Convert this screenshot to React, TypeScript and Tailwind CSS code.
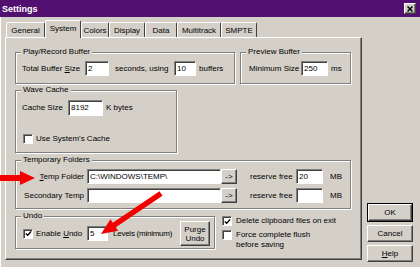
import type { ReactNode } from "react";

const tabs = [
  { label: "General", width: "w-[39px]" },
  { label: "System", width: "w-[36px]", active: true },
  { label: "Colors", width: "w-[28px]" },
  { label: "Display", width: "w-[36px]" },
  { label: "Data", width: "w-[32px]" },
  { label: "Multitrack", width: "w-[44px]" },
  { label: "SMPTE", width: "w-[36px]" },
];

// win9x 3d edges
const sunken =
  "bg-white border border-[#808080] border-r-white border-b-white shadow-[inset_1px_1px_0_#404040]";
const raised =
  "bg-[#d4d0c8] border border-white border-r-[#404040] border-b-[#404040] shadow-[inset_-1px_-1px_0_#808080]";

function Group({ title, className, children }: { title: string; className: string; children: ReactNode }) {
  return (
    <div className={`flex flex-col border border-[#808080] shadow-[inset_1px_1px_0_#fff,1px_1px_0_#fff] ${className}`}>
      <span className="-mt-[6px] ml-[5px] self-start bg-[#d4d0c8] px-[2px] leading-[10px]">{title}</span>
      {children}
    </div>
  );
}

function Field({ value = "", className }: { value?: string; className: string }) {
  return <div className={`flex items-center pl-[2px] ${sunken} ${className}`}>{value}</div>;
}

function Check({ checked = false }: { checked?: boolean }) {
  return (
    <div className={`flex h-[10px] w-[10px] shrink-0 items-center justify-center ${sunken}`}>
      {checked && (
        <svg width="7" height="7" viewBox="0 0 7 7" fill="none">
          <path d="M0.8 3.4L2.7 5.3L6.2 1.4" stroke="#000" strokeWidth="1.4" />
        </svg>
      )}
    </div>
  );
}

function FolderRow({ label, value, reserve }: { label: ReactNode; value?: string; reserve?: string }) {
  return (
    <div className="flex items-center mt-[4px] pl-[6px]">
      <span className="w-[65px] pr-[3px] text-right">{label}</span>
      <Field value={value} className="w-[134px] h-[15px]" />
      <div className={`flex h-[15px] w-[16px] items-center justify-center ${raised}`}>-&gt;</div>
      <span className="ml-[13px] w-[46px]">reserve free</span>
      <Field value={reserve} className="w-[27px] h-[15px]" />
      <span className="ml-[7px]">MB</span>
    </div>
  );
}

export default function App() {
  return (
    <div className="relative h-[267px] w-[420px] overflow-hidden whitespace-nowrap bg-[#d4d0c8] font-['Liberation_Sans',Arial,sans-serif] text-[8px] leading-[10px] text-black shadow-[inset_1px_0_0_#fff]">
      {/* title bar */}
      <div className="flex h-[17px] items-center justify-between bg-[#51106f] pl-[2px] pr-[4px]">
        <span className="text-[9px] font-bold text-white">Settings</span>
        <div className={`flex h-[11px] w-[12px] items-center justify-center ${raised}`}>
          <svg width="6" height="6" viewBox="0 0 6 6">
            <path d="M0.5 0.5L5.5 5.5M5.5 0.5L0.5 5.5" stroke="#000" strokeWidth="1.5" />
          </svg>
        </div>
      </div>

      <div className="flex pl-[5px] pt-[3px]">
        <div className="flex w-[357px] flex-col">
          {/* tabs */}
          <div className="flex h-[17px] items-end pl-[1px]">
            {tabs.map((t) =>
              t.active ? (
                <div
                  key={t.label}
                  className={`${t.width} relative z-10 -mb-px flex h-[18px] items-start justify-center rounded-t-[2px] border-l border-t border-r border-white border-r-[#404040] bg-[#d4d0c8] pt-[3px]`}
                >
                  {t.label}
                </div>
              ) : (
                <div
                  key={t.label}
                  className={`${t.width} flex h-[15px] items-center justify-center rounded-t-[2px] border-l border-t border-r border-white border-r-[#404040] pt-[1px]`}
                >
                  {t.label}
                </div>
              )
            )}
          </div>

          {/* tab panel */}
          <div className="flex h-[223px] flex-col border border-white border-r-[#404040] border-b-[#404040] pl-[9px] shadow-[inset_-1px_-1px_0_#808080]">
            <div className="mt-[14px] flex gap-[5px]">
              <Group title="Play/Record Buffer" className="h-[32px] w-[220px]">
                <div className="mt-[4px] flex items-center pl-[6px]">
                  <span className="w-[63px]">
                    Total Buffer <u>S</u>ize
                  </span>
                  <Field value="2" className="h-[15px] w-[24px]" />
                  <span className="ml-[6px] w-[59px]">seconds, using</span>
                  <Field value="10" className="h-[15px] w-[22px]" />
                  <span className="ml-[3px]">buffers</span>
                </div>
              </Group>
              <Group title="Preview Buffer" className="h-[32px] w-[111px]">
                <div className="mt-[4px] flex items-center pl-[8px]">
                  <span className="w-[52px]">Minimum Size</span>
                  <Field value="250" className="h-[15px] w-[27px]" />
                  <span className="ml-[3px]">ms</span>
                </div>
              </Group>
            </div>

            <Group title="Wave Cache" className="mt-[6px] h-[63px] w-[162px]">
              <div className="mt-[5px] flex items-center pl-[6px]">
                <span className="w-[46px]">Cache Size</span>
                <Field value="8192" className="h-[16px] w-[35px]" />
                <span className="ml-[3px]">K bytes</span>
              </div>
              <div className="mt-[18px] flex items-center gap-[3px] pl-[7px]">
                <Check />
                <span>Use System's Cache</span>
              </div>
            </Group>

            <Group title="Temporary Folders" className="mt-[7px] h-[49px] w-[336px]">
              <FolderRow label={<><u>T</u>emp Folder</>} value="C:\WINDOWS\TEMP\" reserve="20" />
              <FolderRow label="Secondary Temp" />
            </Group>

            <div className="mt-[7px] flex">
              <Group title="Undo" className="h-[33px] w-[200px]">
                <div className="flex h-[25px] items-center pl-[7px]">
                  <Check checked />
                  <span className="ml-[3px] w-[51px]">
                    Enable <u>U</u>ndo
                  </span>
                  <Field value="5" className="h-[15px] w-[21px]" />
                  <span className="ml-[5px] w-[62px] tracking-[-0.25px]">Levels (minimum)</span>
                  <div className={`ml-[5px] flex h-[25px] w-[30px] flex-col items-center justify-center leading-[9px] ${raised}`}>
                    <span>Purge</span>
                    <span>Undo</span>
                  </div>
                </div>
              </Group>
              <div className="ml-[7px] flex flex-col">
                <div className="flex items-center gap-[4px]">
                  <Check checked />
                  <span>Delete clipboard files on exit</span>
                </div>
                <div className="mt-[4px] flex items-start gap-[4px]">
                  <Check />
                  <span>
                    Force complete flush
                    <br />
                    before saving
                  </span>
                </div>
              </div>
            </div>
          </div>
        </div>

        {/* dialog buttons */}
        <div className="ml-[5px] mt-[183px] flex w-[46px] flex-col">
          <div className="border border-black">
            <div className={`flex h-[17px] items-center justify-center ${raised}`}>OK</div>
          </div>
          <div className={`mt-[3px] flex h-[17px] items-center justify-center ${raised}`}>Cancel</div>
          <div className={`mt-[3px] flex h-[17px] items-center justify-center ${raised}`}>
            <span>
              <u>H</u>elp
            </span>
          </div>
        </div>
      </div>

      {/* red annotation arrows */}
      <svg className="pointer-events-none absolute left-0 top-0" width="420" height="267">
        <polygon points="0,175 20,175 20,171 35,178 20,185 20,181 0,181" fill="#f20000" />
        <polygon
          points="101,234 118.2,230.8 115.8,227.2 162.5,195.7 159.5,191.3 112.8,222.8 110.4,219.2"
          fill="#f20000"
        />
      </svg>
    </div>
  );
}
